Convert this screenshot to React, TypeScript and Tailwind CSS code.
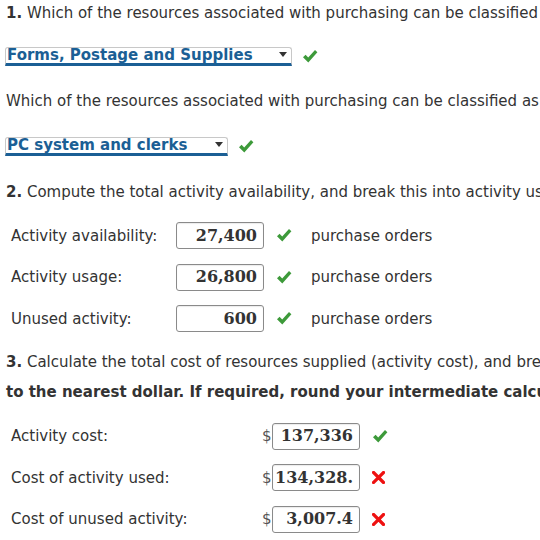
import { ReactNode } from 'react';

const sans = { fontFamily: '"DejaVu Sans", Verdana, sans-serif' };

function Check() {
    return (
        <svg width="16" height="15" viewBox="0 0 16 15" className="shrink-0">
            <path d="M1 8.2 L3.6 5.8 L6.2 8.6 L13 1 L15.4 3.3 L6.3 13.6 Z" fill="#3d9a3a" />
        </svg>
    );
}

function Cross() {
    return (
        <svg width="13" height="13" viewBox="0 0 13 13" className="shrink-0">
            <path d="M1.5 1.5 L11.5 11.5 M11.5 1.5 L1.5 11.5" stroke="#ee1111" strokeWidth="3.2" strokeLinecap="square" />
        </svg>
    );
}

function Dropdown({ value, width }: { value: string; width: string }) {
    return (
        <div className="flex items-center gap-[10px] -ml-[1px]">
            <div className={`${width} h-[19px] flex items-end justify-between overflow-hidden bg-white border border-[#c8c8c8] border-b-[3px] border-b-[#1b5f95] rounded-t-[3px] pl-[1px] pr-[4px]`}>
                <span className="text-[15px] font-bold text-[#1b5f95] leading-[16px]">{value}</span>
                <span className="mb-[6px] w-0 h-0 border-l-[4px] border-r-[4px] border-t-[5px] border-l-transparent border-r-transparent border-t-[#333]" />
            </div>
            <Check />
        </div>
    );
}

function NumBox({ value }: { value: string }) {
    return (
        <div
            className="w-[88px] h-[27px] border border-[#8a8a8a] rounded-[3px] bg-white flex items-center justify-end pr-[6px] text-[16px] font-bold text-[#333] shadow-[inset_0_1px_1px_rgba(0,0,0,0.08)]"
            style={{ fontFamily: '"DejaVu Serif", Georgia, serif' }}
        >
            {value}
        </div>
    );
}

function UsageRow({ label, value }: { label: string; value: string }) {
    return (
        <div className="flex items-center h-[41.5px]">
            <span className="w-[170px] pl-[5px]">{label}</span>
            <NumBox value={value} />
            <span className="ml-[12px]"><Check /></span>
            <span className="ml-[19px]">purchase orders</span>
        </div>
    );
}

function CostRow({ label, value, mark }: { label: string; value: string; mark: ReactNode }) {
    return (
        <div className="flex items-center h-[41.5px]">
            <span className="w-[256px] pl-[5px]">{label}</span>
            <span className="text-[#555] w-[10px]">$</span>
            <NumBox value={value} />
            <span className="ml-[12px]">{mark}</span>
        </div>
    );
}

export default function App() {
    return (
        <div className="w-[540px] h-[540px] overflow-hidden bg-white text-[#333] text-[15px] pl-[6px] whitespace-nowrap" style={sans}>
            <p className="leading-[20px] pt-[3px]">
                <b>1.</b> Which of the resources associated with purchasing can be classified as
            </p>
            <div className="mt-[24px]">
                <Dropdown value="Forms, Postage and Supplies" width="w-[287px]" />
            </div>
            <p className="leading-[20px] mt-[25px]">
                Which of the resources associated with purchasing can be classified as unused?
            </p>
            <div className="mt-[26px]">
                <Dropdown value="PC system and clerks" width="w-[223px]" />
            </div>
            <p className="leading-[20px] mt-[26px]">
                <b>2.</b> Compute the total activity availability, and break this into activity usage and unused activity.
            </p>
            <div className="mt-[13px]">
                <UsageRow label="Activity availability:" value="27,400" />
                <UsageRow label="Activity usage:" value="26,800" />
                <UsageRow label="Unused activity:" value="600" />
            </div>
            <p className="leading-[30px] mt-[7px]">
                <b>3.</b> Calculate the total cost of resources supplied (activity cost), and break this into the cost of activity used and unused. Round your answers
                <br />
                <b>to the nearest dollar. If required, round your intermediate calculations to the nearest cent.</b>
            </p>
            <div className="mt-[9px]">
                <CostRow label="Activity cost:" value="137,336" mark={<Check />} />
                <CostRow label="Cost of activity used:" value="134,328." mark={<Cross />} />
                <CostRow label="Cost of unused activity:" value="3,007.4" mark={<Cross />} />
            </div>
        </div>
    );
}
